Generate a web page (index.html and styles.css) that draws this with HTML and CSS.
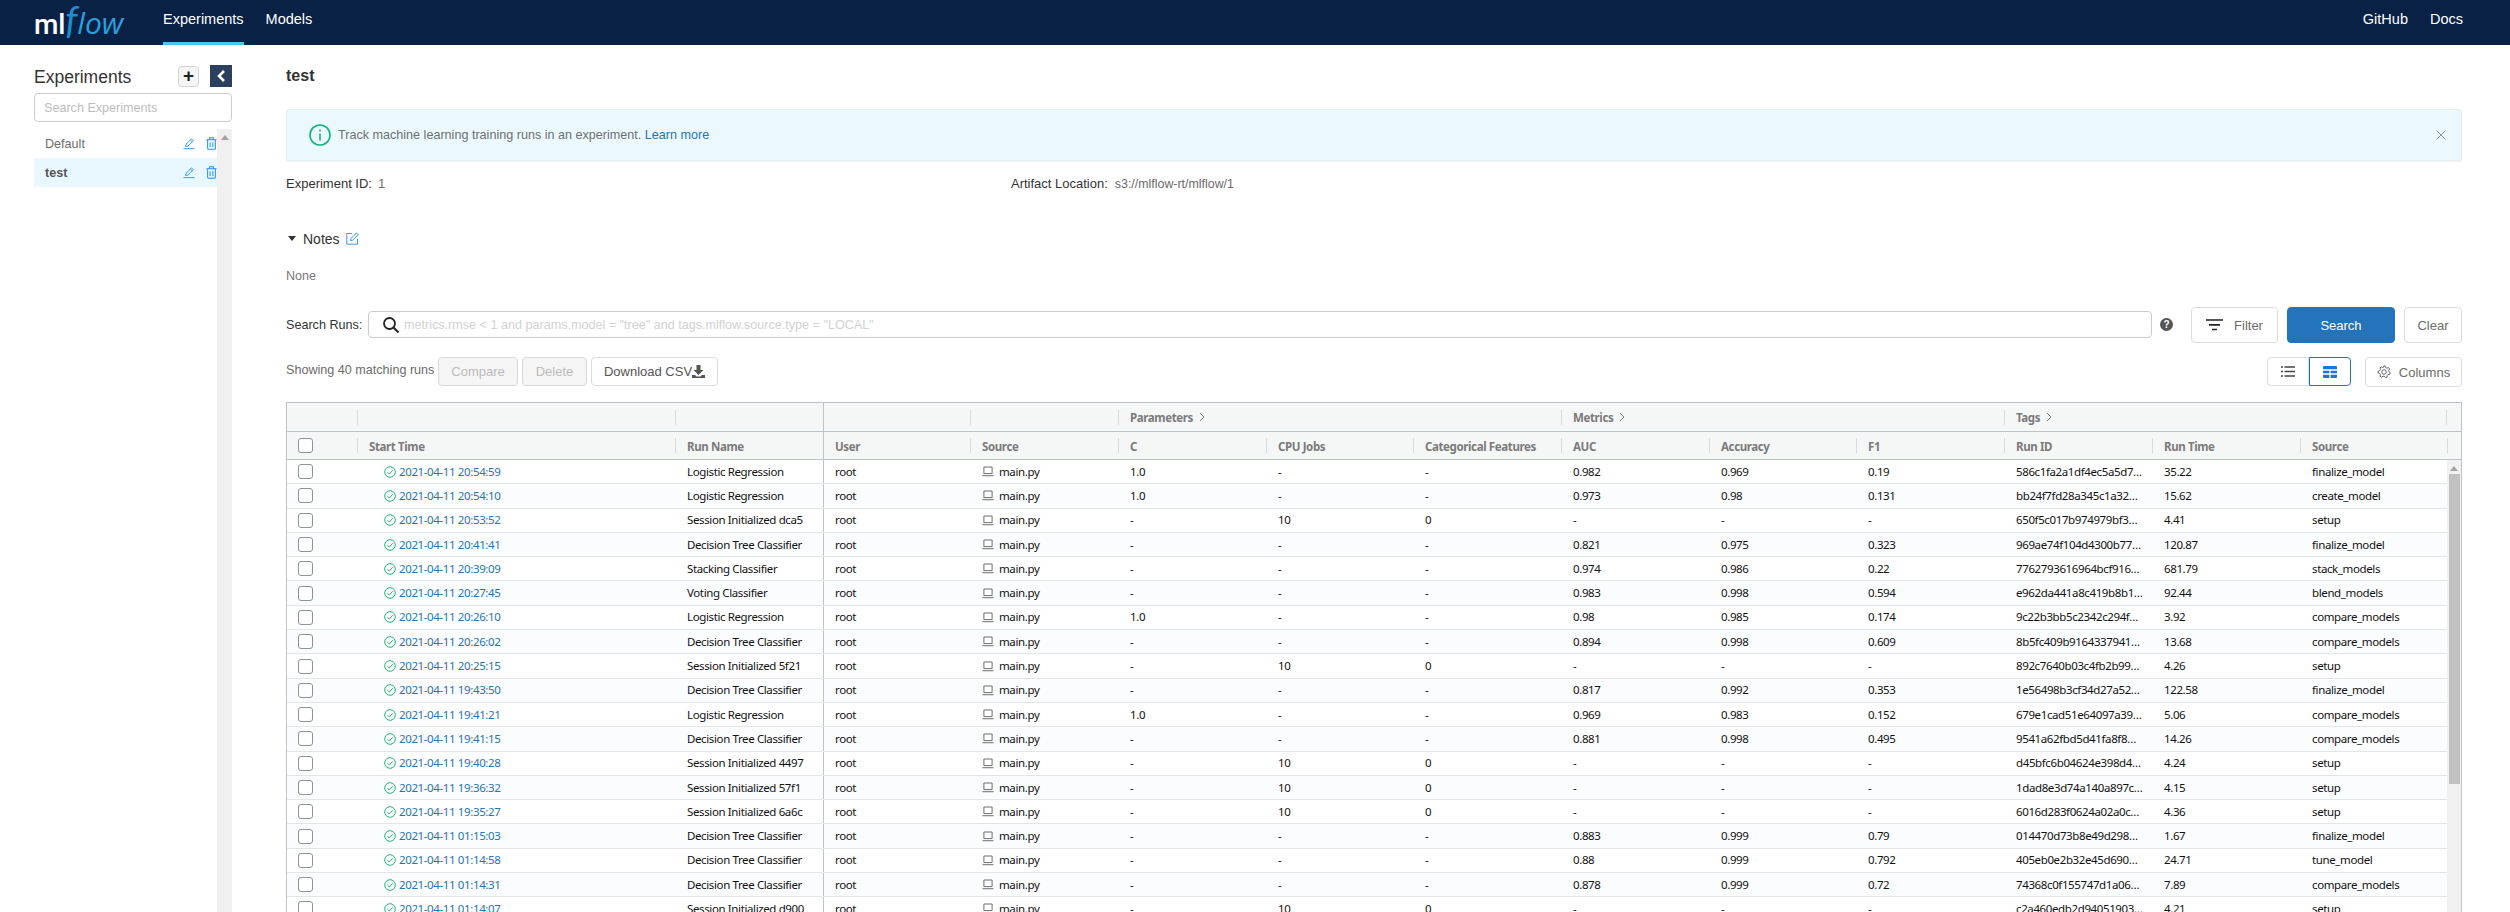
FILE: index.html
```html
<!DOCTYPE html>
<html lang="en">
<head>
<meta charset="utf-8">
<title>MLflow</title>
<link rel="stylesheet" href="styles.css">
</head>
<body>
<svg class="defs" aria-hidden="true">
  <symbol id="ok" viewBox="0 0 12 12"><circle cx="6" cy="6" r="5.300" fill="none" stroke="#21b573" stroke-width="1"/><path d="M3.400 6.200 5.300 8 8.700 4.300" fill="none" stroke="#21b573" stroke-width="1"/></symbol>
  <symbol id="laptop" viewBox="0 0 12 11"><path d="M1.900 1h8.200v6.600H1.900z" fill="none" stroke="#6f6f6f" stroke-width="1"/><path d="M.5 9h11v1.300H.5z" fill="#8c8c8c"/></symbol>
  <symbol id="pen" viewBox="0 0 14 14"><path d="M.5 13h13" stroke="#1890ff" fill="none"/><path d="M3 10.500l.5-2.600L9.900 1.600l2.200 2.200-6.400 6.300z M8.600 2.900l2.200 2.200" fill="none" stroke="#1890ff"/></symbol>
  <symbol id="bin" viewBox="0 0 12 14"><path d="M.5 2.800h11M4 2.600V.8h4v1.800M1.800 3v9.200c0 .7.4 1.200 1 1.200h6.400c.6 0 1-.5 1-1.200V3M4.500 5.500v5.500M7.500 5.500v5.500" fill="none" stroke="#1890ff" stroke-width="1.100"/></symbol>
  <symbol id="chev" viewBox="0 0 6 10"><path d="M1 1l4 4-4 4" fill="none" stroke="#808080"/></symbol>
</svg>

<header class="nav">
  <div class="logo"><span class="ml">ml</span><span class="f">f</span><span class="low">low</span></div>
  <a class="tab active">Experiments</a>
  <a class="tab">Models</a>
  <div class="spacer"></div>
  <a class="tab">GitHub</a>
  <a class="tab docs">Docs</a>
</header>

<div class="page">
  <aside class="side">
    <div class="side-head">
      <span class="side-title">Experiments</span>
      <button class="plus">+</button>
      <button class="collapse"><svg width="10" height="14" viewBox="0 0 10 14"><path d="M8 2 3 7l5 5" fill="none" stroke="#fff" stroke-width="2.600"/></svg></button>
    </div>
    <input class="side-search" placeholder="Search Experiments">
    <div class="side-body">
      <ul class="side-list">
        <li class="side-item"><span class="side-name">Default</span><svg class="pen"><use href="#pen"/></svg><svg class="bin"><use href="#bin"/></svg></li>
        <li class="side-item sel"><span class="side-name">test</span><svg class="pen"><use href="#pen"/></svg><svg class="bin"><use href="#bin"/></svg></li>
      </ul>
      <div class="side-scroll"><i class="arrow"></i></div>
    </div>
  </aside>

  <main class="main">
    <h1 class="title">test</h1>
    <div class="alert">
      <svg class="alert-i" width="22" height="22" viewBox="0 0 22 22"><circle cx="11" cy="11" r="10" fill="none" stroke="#13b383" stroke-width="1.600"/><path d="M11 9.500v7" stroke="#13b383" stroke-width="1.600"/><circle cx="11" cy="6.500" r="1" fill="#13b383"/></svg>
      <span class="alert-t">Track machine learning training runs in an experiment. <a class="link">Learn more</a></span>
      <svg class="alert-x" width="10" height="10" viewBox="0 0 10 10"><path d="M.5.5l9 9M9.500.5l-9 9" stroke="#8f9498" fill="none"/></svg>
    </div>
    <div class="meta">
      <div class="meta-a"><span class="k">Experiment ID:</span><span class="v">1</span></div>
      <div class="meta-b"><span class="k">Artifact Location:</span><span class="v">s3://mlflow-rt/mlflow/1</span></div>
    </div>
    <div class="notes"><i class="tri"></i><span class="notes-t">Notes</span>
      <svg width="13" height="13" viewBox="0 0 13 13"><path d="M11.500 7v5.200H.8V1.500H6" fill="none" stroke="#3f9be6"/><path d="M4.500 8.500l.4-2L10.600.9l1.700 1.700L6.600 8.200z" fill="none" stroke="#3f9be6"/></svg>
    </div>
    <p class="none">None</p>

    <div class="search">
      <label class="search-l">Search Runs:</label>
      <div class="search-box">
        <svg width="18" height="18" viewBox="0 0 18 18"><circle cx="7.500" cy="7.500" r="5.500" fill="none" stroke="#222" stroke-width="1.800"/><path d="M11.500 11.500 16.500 16.500" stroke="#222" stroke-width="2"/></svg>
        <input class="search-in" placeholder='metrics.rmse &lt; 1 and params.model = "tree" and tags.mlflow.source.type = "LOCAL"'>
      </div>
      <span class="help">?</span>
      <button class="btn filter"><svg width="17" height="12" viewBox="0 0 17 12"><path d="M0 1h17M3 5.800h11M6 10.500h5" stroke="#222" stroke-width="1.700"/></svg><span>Filter</span></button>
      <button class="btn primary">Search</button>
      <button class="btn clear">Clear</button>
    </div>

    <div class="tools">
      <span class="count">Showing 40 matching runs</span>
      <button class="btn dis cmp">Compare</button>
      <button class="btn dis del">Delete</button>
      <button class="btn dl">Download CSV<svg width="13" height="13" viewBox="0 0 13 13"><path d="M4.500 0h4v5h3L6.500 10 1.500 5h3zM0 10h3l1.500 1.500h4L10 10h3v3H0z" fill="#555"/></svg></button>
      <div class="spacer"></div>
      <button class="view"><svg width="14" height="11" viewBox="0 0 14 11"><path d="M0 1h2M0 5.500h2M0 10h2M3.500 1H14M3.500 5.500H14M3.500 10H14" stroke="#444" stroke-width="1.700"/></svg></button>
      <button class="view on"><svg width="14" height="12" viewBox="0 0 14 12"><path d="M1 0h12a1 1 0 0 1 1 1v10a1 1 0 0 1-1 1H1a1 1 0 0 1-1-1V1a1 1 0 0 1 1-1z" fill="#1a73e8"/><path d="M0 4h14M0 8h14M7 4v8" stroke="#fff" stroke-width="1.300"/></svg></button>
      <button class="btn cols"><svg width="14" height="14" viewBox="0 0 14 14"><path d="M7 .8l1.200.2.500 1.600 1.200.6 1.500-.7 1.200 1.500-.9 1.400.2 1.300 1.300.9-.5 1.800-1.600.1-.9 1-.1 1.600-1.800.5-1-1.300-1.300-.1-1.300 1-1.600-.9.3-1.600-.7-1.200-1.600-.5.1-1.900 1.500-.5.7-1.200-.4-1.600 1.600-1 1.200 1.100z" fill="none" stroke="#666"/><circle cx="7" cy="7" r="2.300" fill="none" stroke="#666"/></svg><span>Columns</span></button>
    </div>

    <section class="table">
      <div class="hrow h1">
        <span class="hc none-b"></span><span class="hc"></span><span class="hc"></span><span class="hc pin"></span><span class="hc"></span>
        <span class="hc g3">Parameters <svg class="chev"><use href="#chev"/></svg></span>
        <span class="hc g3">Metrics <svg class="chev"><use href="#chev"/></svg></span>
        <span class="hc g3">Tags <svg class="chev"><use href="#chev"/></svg></span>
        <span class="hc end"></span>
      </div>
      <div class="hrow h2">
        <span class="cb-cell"><i class="box"></i></span>
        <span class="hc">Start Time</span><span class="hc">Run Name</span><span class="hc pin">User</span><span class="hc">Source</span>
        <span class="hc">C</span><span class="hc">CPU Jobs</span><span class="hc">Categorical Features</span>
        <span class="hc">AUC</span><span class="hc">Accuracy</span><span class="hc">F1</span>
        <span class="hc">Run ID</span><span class="hc">Run Time</span><span class="hc">Source</span><span class="hc end"></span>
      </div>
      <div class="tbody">
        <div class="rows">
          <div class="row"><span class="cb-cell"><i class="box"></i></span><span class="date"><svg class="ok"><use href="#ok"/></svg><a>2021-04-11 20:54:59</a></span><span>Logistic Regression</span><span class="u">root</span><span class="src"><svg class="lap"><use href="#laptop"/></svg>main.py</span><span>1.0</span><span>-</span><span>-</span><span>0.982</span><span>0.969</span><span>0.19</span><span>586c1fa2a1df4ec5a5d7…</span><span>35.22</span><span>finalize_model</span></div>
          <div class="row"><span class="cb-cell"><i class="box"></i></span><span class="date"><svg class="ok"><use href="#ok"/></svg><a>2021-04-11 20:54:10</a></span><span>Logistic Regression</span><span class="u">root</span><span class="src"><svg class="lap"><use href="#laptop"/></svg>main.py</span><span>1.0</span><span>-</span><span>-</span><span>0.973</span><span>0.98</span><span>0.131</span><span>bb24f7fd28a345c1a32…</span><span>15.62</span><span>create_model</span></div>
          <div class="row"><span class="cb-cell"><i class="box"></i></span><span class="date"><svg class="ok"><use href="#ok"/></svg><a>2021-04-11 20:53:52</a></span><span>Session Initialized dca5</span><span class="u">root</span><span class="src"><svg class="lap"><use href="#laptop"/></svg>main.py</span><span>-</span><span>10</span><span>0</span><span>-</span><span>-</span><span>-</span><span>650f5c017b974979bf3…</span><span>4.41</span><span>setup</span></div>
          <div class="row"><span class="cb-cell"><i class="box"></i></span><span class="date"><svg class="ok"><use href="#ok"/></svg><a>2021-04-11 20:41:41</a></span><span>Decision Tree Classifier</span><span class="u">root</span><span class="src"><svg class="lap"><use href="#laptop"/></svg>main.py</span><span>-</span><span>-</span><span>-</span><span>0.821</span><span>0.975</span><span>0.323</span><span>969ae74f104d4300b77…</span><span>120.87</span><span>finalize_model</span></div>
          <div class="row"><span class="cb-cell"><i class="box"></i></span><span class="date"><svg class="ok"><use href="#ok"/></svg><a>2021-04-11 20:39:09</a></span><span>Stacking Classifier</span><span class="u">root</span><span class="src"><svg class="lap"><use href="#laptop"/></svg>main.py</span><span>-</span><span>-</span><span>-</span><span>0.974</span><span>0.986</span><span>0.22</span><span>7762793616964bcf916…</span><span>681.79</span><span>stack_models</span></div>
          <div class="row"><span class="cb-cell"><i class="box"></i></span><span class="date"><svg class="ok"><use href="#ok"/></svg><a>2021-04-11 20:27:45</a></span><span>Voting Classifier</span><span class="u">root</span><span class="src"><svg class="lap"><use href="#laptop"/></svg>main.py</span><span>-</span><span>-</span><span>-</span><span>0.983</span><span>0.998</span><span>0.594</span><span>e962da441a8c419b8b1…</span><span>92.44</span><span>blend_models</span></div>
          <div class="row"><span class="cb-cell"><i class="box"></i></span><span class="date"><svg class="ok"><use href="#ok"/></svg><a>2021-04-11 20:26:10</a></span><span>Logistic Regression</span><span class="u">root</span><span class="src"><svg class="lap"><use href="#laptop"/></svg>main.py</span><span>1.0</span><span>-</span><span>-</span><span>0.98</span><span>0.985</span><span>0.174</span><span>9c22b3bb5c2342c294f…</span><span>3.92</span><span>compare_models</span></div>
          <div class="row"><span class="cb-cell"><i class="box"></i></span><span class="date"><svg class="ok"><use href="#ok"/></svg><a>2021-04-11 20:26:02</a></span><span>Decision Tree Classifier</span><span class="u">root</span><span class="src"><svg class="lap"><use href="#laptop"/></svg>main.py</span><span>-</span><span>-</span><span>-</span><span>0.894</span><span>0.998</span><span>0.609</span><span>8b5fc409b9164337941…</span><span>13.68</span><span>compare_models</span></div>
          <div class="row"><span class="cb-cell"><i class="box"></i></span><span class="date"><svg class="ok"><use href="#ok"/></svg><a>2021-04-11 20:25:15</a></span><span>Session Initialized 5f21</span><span class="u">root</span><span class="src"><svg class="lap"><use href="#laptop"/></svg>main.py</span><span>-</span><span>10</span><span>0</span><span>-</span><span>-</span><span>-</span><span>892c7640b03c4fb2b99…</span><span>4.26</span><span>setup</span></div>
          <div class="row"><span class="cb-cell"><i class="box"></i></span><span class="date"><svg class="ok"><use href="#ok"/></svg><a>2021-04-11 19:43:50</a></span><span>Decision Tree Classifier</span><span class="u">root</span><span class="src"><svg class="lap"><use href="#laptop"/></svg>main.py</span><span>-</span><span>-</span><span>-</span><span>0.817</span><span>0.992</span><span>0.353</span><span>1e56498b3cf34d27a52…</span><span>122.58</span><span>finalize_model</span></div>
          <div class="row"><span class="cb-cell"><i class="box"></i></span><span class="date"><svg class="ok"><use href="#ok"/></svg><a>2021-04-11 19:41:21</a></span><span>Logistic Regression</span><span class="u">root</span><span class="src"><svg class="lap"><use href="#laptop"/></svg>main.py</span><span>1.0</span><span>-</span><span>-</span><span>0.969</span><span>0.983</span><span>0.152</span><span>679e1cad51e64097a39…</span><span>5.06</span><span>compare_models</span></div>
          <div class="row"><span class="cb-cell"><i class="box"></i></span><span class="date"><svg class="ok"><use href="#ok"/></svg><a>2021-04-11 19:41:15</a></span><span>Decision Tree Classifier</span><span class="u">root</span><span class="src"><svg class="lap"><use href="#laptop"/></svg>main.py</span><span>-</span><span>-</span><span>-</span><span>0.881</span><span>0.998</span><span>0.495</span><span>9541a62fbd5d41fa8f8…</span><span>14.26</span><span>compare_models</span></div>
          <div class="row"><span class="cb-cell"><i class="box"></i></span><span class="date"><svg class="ok"><use href="#ok"/></svg><a>2021-04-11 19:40:28</a></span><span>Session Initialized 4497</span><span class="u">root</span><span class="src"><svg class="lap"><use href="#laptop"/></svg>main.py</span><span>-</span><span>10</span><span>0</span><span>-</span><span>-</span><span>-</span><span>d45bfc6b04624e398d4…</span><span>4.24</span><span>setup</span></div>
          <div class="row"><span class="cb-cell"><i class="box"></i></span><span class="date"><svg class="ok"><use href="#ok"/></svg><a>2021-04-11 19:36:32</a></span><span>Session Initialized 57f1</span><span class="u">root</span><span class="src"><svg class="lap"><use href="#laptop"/></svg>main.py</span><span>-</span><span>10</span><span>0</span><span>-</span><span>-</span><span>-</span><span>1dad8e3d74a140a897c…</span><span>4.15</span><span>setup</span></div>
          <div class="row"><span class="cb-cell"><i class="box"></i></span><span class="date"><svg class="ok"><use href="#ok"/></svg><a>2021-04-11 19:35:27</a></span><span>Session Initialized 6a6c</span><span class="u">root</span><span class="src"><svg class="lap"><use href="#laptop"/></svg>main.py</span><span>-</span><span>10</span><span>0</span><span>-</span><span>-</span><span>-</span><span>6016d283f0624a02a0c…</span><span>4.36</span><span>setup</span></div>
          <div class="row"><span class="cb-cell"><i class="box"></i></span><span class="date"><svg class="ok"><use href="#ok"/></svg><a>2021-04-11 01:15:03</a></span><span>Decision Tree Classifier</span><span class="u">root</span><span class="src"><svg class="lap"><use href="#laptop"/></svg>main.py</span><span>-</span><span>-</span><span>-</span><span>0.883</span><span>0.999</span><span>0.79</span><span>014470d73b8e49d298…</span><span>1.67</span><span>finalize_model</span></div>
          <div class="row"><span class="cb-cell"><i class="box"></i></span><span class="date"><svg class="ok"><use href="#ok"/></svg><a>2021-04-11 01:14:58</a></span><span>Decision Tree Classifier</span><span class="u">root</span><span class="src"><svg class="lap"><use href="#laptop"/></svg>main.py</span><span>-</span><span>-</span><span>-</span><span>0.88</span><span>0.999</span><span>0.792</span><span>405eb0e2b32e45d690…</span><span>24.71</span><span>tune_model</span></div>
          <div class="row"><span class="cb-cell"><i class="box"></i></span><span class="date"><svg class="ok"><use href="#ok"/></svg><a>2021-04-11 01:14:31</a></span><span>Decision Tree Classifier</span><span class="u">root</span><span class="src"><svg class="lap"><use href="#laptop"/></svg>main.py</span><span>-</span><span>-</span><span>-</span><span>0.878</span><span>0.999</span><span>0.72</span><span>74368c0f155747d1a06…</span><span>7.89</span><span>compare_models</span></div>
          <div class="row"><span class="cb-cell"><i class="box"></i></span><span class="date"><svg class="ok"><use href="#ok"/></svg><a>2021-04-11 01:14:07</a></span><span>Session Initialized d900</span><span class="u">root</span><span class="src"><svg class="lap"><use href="#laptop"/></svg>main.py</span><span>-</span><span>10</span><span>0</span><span>-</span><span>-</span><span>-</span><span>c2a460edb2d94051903…</span><span>4.21</span><span>setup</span></div>
        </div>
        <div class="scroll"><i class="arrow"></i><div class="thumb"></div></div>
      </div>
    </section>
  </main>
</div>
</body>
</html>
```
FILE: styles.css
```css
* { box-sizing: border-box; }
html, body { height: 100%; }
body {
  margin: 0;
  height: 912px;
  overflow: hidden;
  background: #fff;
  font-family: "Liberation Sans", Arial, sans-serif;
  font-size: 12.6px;
  color: #333;
  display: flex;
  flex-direction: column;
}
.defs { width: 0; height: 0; display: block; }
button { font-family: inherit; cursor: pointer; }
.spacer { flex: 1; }

/* nav */
.nav {
  height: 45px;
  flex: none;
  background: #082144;
  display: flex;
  align-items: stretch;
  padding-left: 34px;
  padding-right: 47px;
}
.logo { width: 129px; display: flex; align-items: baseline; color: #fff; line-height: 38px; }
.ml { font-family: Roboto, sans-serif; font-weight: 500; font-size: 28px; letter-spacing: -.2px; }
.f { font-family: Lato, sans-serif; font-style: italic; font-size: 38px; color: #1a8fd0; line-height: 38px; }
.low { font-family: "Open Sans", sans-serif; font-style: italic; font-size: 30px; color: #2b9fdc; }
.tab {
  color: #fff;
  font-size: 14.500px;
  line-height: 38px;
  margin-right: 22px;
  border-bottom: 3px solid transparent;
}
.tab.active { border-bottom-color: #43c9ed; }
.tab.docs { margin-right: 0; }

.page { flex: 1; display: flex; min-height: 0; }

/* sidebar */
.side { width: 252px; flex: none; padding: 20px 0 0 34px; display: flex; flex-direction: column; min-height: 0; }
.side-head { width: 198px; height: 22px; display: flex; align-items: center; }
.side-title { font-size: 17.500px; color: #333; flex: 1; padding-top: 2px; }
.plus {
  width: 21px; height: 21px; padding: 0;
  border: 1px solid #d4d4d4; border-radius: 4px;
  background: #f5f5f5; color: #222;
  font-size: 19px; font-weight: 700; line-height: 18px;
}
.collapse {
  width: 22px; height: 22px; padding: 0; margin-left: 11px; border: 0;
  background: #2b405f;
  display: flex; align-items: center; justify-content: center;
}
.side-search {
  width: 198px; height: 29px; margin-top: 6px;
  border: 1px solid #ccc; border-radius: 4px;
  padding: 0 9px;
  font: 12.600px "Liberation Sans", Arial, sans-serif;
  outline: 0;
}
.side-search::placeholder { color: #bdbdbd; }
.side-body { flex: 1; width: 198px; margin-top: 7px; display: flex; min-height: 0; }
.side-list { list-style: none; margin: 0; padding: 0; width: 183px; }
.side-item { height: 29px; display: flex; align-items: center; padding-left: 11px; color: #6b6b6b; }
.side-item.sel { background: #e9f8fe; color: #555; font-weight: 700; }
.side-name { flex: 1; }
.pen { width: 12px; height: 13px; margin-right: 11px; }
.bin { width: 11px; height: 13px; }
.side-scroll { width: 15px; background: #f0f0f0; padding-top: 6px; display: flex; flex-direction: column; align-items: center; }
.arrow { width: 0; height: 0; border: 4px solid transparent; border-top: 0; border-bottom: 5px solid #a3a3a3; display: block; }

/* main */
.main { flex: 1; min-width: 0; padding: 22px 48px 0 34px; }
.title { margin: 0; font-size: 16px; line-height: 18px; font-weight: 700; color: #333; }
.alert {
  height: 52px;
  margin-top: 24px;
  background: #ebf9fe;
  border: 1px solid #e6eef1;
  border-radius: 3px;
  box-shadow: 0 1px 1px rgba(0,0,0,.06);
  display: flex;
  align-items: center;
  padding: 0 15px 0 22px;
}
.alert-t { flex: 1; margin-left: 7px; color: #6c7073; }
.link { color: #2374bb; }
.meta { display: flex; height: 15px; margin-top: 15px; line-height: 15px; font-size: 13px; }
.meta-a { width: 725px; }
.meta .k { color: #333; margin-right: 6px; }
.meta .v { color: #6b6b6b; }
.meta-b .k { margin-right: 7px; }
.meta-b .v { font-size: 12.400px; }
.notes { display: flex; align-items: center; margin-top: 39px; height: 17px; padding-left: 2px; }
.tri { width: 0; height: 0; border: 4px solid transparent; border-top: 5px solid #333; border-bottom: 0; display: block; }
.notes-t { font-size: 14px; margin: 0 6px 0 7px; }
.none { margin: 22px 0 0; height: 15px; line-height: 15px; color: #787878; }

.search { display: flex; align-items: flex-start; height: 36px; margin-top: 23px; }
.search-l { line-height: 36px; color: #333; width: 82px; flex: none; }
.search-box {
  flex: none; width: 1784px; height: 27px; margin-top: 4px;
  border: 1px solid #ccc; border-radius: 4px;
  display: flex; align-items: center; padding-left: 13px;
}
.search-in { flex: 1; border: 0; outline: 0; margin-left: 4px; padding: 0; background: none; font: 12.600px "Liberation Sans", Arial, sans-serif; }
.search-in::placeholder { color: #d2d2d2; }
.help {
  width: 13px; height: 13px; border-radius: 50%; background: #555; color: #fff;
  font-size: 10px; font-weight: 700; line-height: 13px; text-align: center;
  margin: 11px 18px 0 8px; flex: none;
}
.btn {
  height: 36px; padding: 0; background: #fff;
  border: 1px solid #dcdcdc; border-radius: 4px;
  color: #6b6b6b; font-size: 13px;
  display: flex; align-items: center; justify-content: center; flex: none;
}
.filter { width: 87px; gap: 11px; margin-right: 9px; }
.primary { width: 108px; background: #2374bb; border-color: #2374bb; color: #fff; margin-right: 9px; }
.clear { width: 58px; }

.tools { display: flex; align-items: flex-start; height: 29px; margin-top: 14px; }
.count { line-height: 29px; color: #6b6b6b; width: 152px; flex: none; white-space: nowrap; margin-top: -1px; }
.tools .btn { height: 29px; }
.dis { background: #f5f5f5; color: #bcbcbc; border-color: #d9d9d9; }
.cmp { width: 80px; margin-right: 4px; }
.del { width: 65px; margin-right: 4px; }
.dl { width: 127px; color: #555; }
.view {
  width: 42px; height: 29px; padding: 0; background: #fff;
  border: 1px solid #dcdcdc; border-radius: 4px 0 0 4px;
  display: flex; align-items: center; justify-content: center;
}
.view.on { border-color: #2374bb; border-radius: 0 4px 4px 0; margin-right: 14px; }
.tools .cols { width: 97px; height: 30px; gap: 8px; }

/* table */
.table {
  margin-top: 16px;
  border: 1px solid #bcc3c9;
  border-bottom: 0;
  font-family: "Noto Sans", sans-serif;
  font-size: 11.500px;
  letter-spacing: -.38px;
  color: #111;
}
.hrow, .row {
  display: grid;
  grid-template-columns: 70px 318px 148px 147px 148px 148px 147px 148px 148px 147px 148px 148px 148px 147px;
}
.hrow {
  grid-template-columns: 70px 318px 148px 147px 148px 148px 147px 148px 148px 147px 148px 148px 148px 147px 14px;
  background: #f5f6f6;
  color: #7b7b7b;
  font-weight: 700;
  align-items: center;
}
.h1 {
  height: 29px;
  border-bottom: 1px solid #bcc3c9;
  grid-template-columns: 70px 318px 148px 147px 148px 443px 443px 442px 14px;
}
.h2 { height: 28px; border-bottom: 1px solid #bcc3c9; }
.hc { height: 15px; line-height: 15px; border-left: 1px solid #d8dbde; padding-left: 11px; white-space: nowrap; }
.h2 .hc { line-height: 17px; }
.h2 .hc.pin { padding-top: 2px; }
.hc.none-b { border-left: 0; }
.hc.pin { height: 100%; display: flex; align-items: center; border-left-color: #bcc3c9; }
.hc.end { padding: 0; }
.g3 { display: flex; align-items: center; }
.chev { width: 6px; height: 10px; margin-left: 6px; }
.cb-cell { display: flex; align-items: center; padding-left: 11px; height: 100%; }
.box { display: block; width: 15px; height: 15px; background: #fff; border: 1px solid #8a949e; border-radius: 3px; }

.tbody { display: flex; height: 470px; overflow: hidden; }
.rows { width: 2160px; flex: none; }
.row { height: 24.300px; border-bottom: 1px solid #e3e6e9; align-items: center; line-height: 16px; }
.row:nth-child(even) { background: #fbfcfe; }
.row > span { padding-left: 12px; white-space: nowrap; }
.row > .cb-cell { padding-left: 11px; }
.row > .u { height: 100%; display: flex; align-items: center; border-left: 1px solid #bcc3c9; padding-left: 11px; }
.row > .date { display: flex; align-items: center; padding-left: 27px; }
.date a { color: #2374bb; margin-left: 3px; }
.ok { width: 12px; height: 12px; flex: none; }
.src { display: flex; align-items: center; }
.lap { width: 12px; height: 11px; margin-right: 5px; flex: none; }
.scroll { width: 14px; background: #f1f1f1; display: flex; flex-direction: column; align-items: center; padding-top: 6px; }
.thumb { width: 11px; height: 310px; margin-top: 3px; background: #c1c1c1; }
```
